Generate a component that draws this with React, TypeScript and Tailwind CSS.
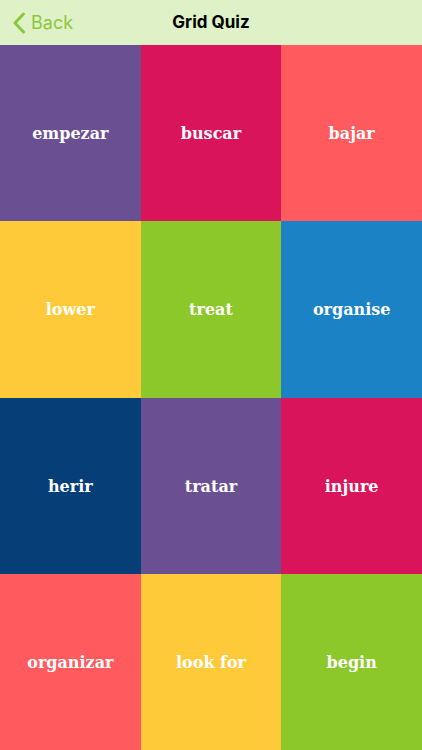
import React from "react";

const tiles: { label: string; bg: string }[] = [
  { label: "empezar", bg: "bg-[#6a4f93]" },
  { label: "buscar", bg: "bg-[#d9145a]" },
  { label: "bajar", bg: "bg-[#ff5a5e]" },
  { label: "lower", bg: "bg-[#ffca3a]" },
  { label: "treat", bg: "bg-[#8cc82a]" },
  { label: "organise", bg: "bg-[#1b82c6]" },
  { label: "herir", bg: "bg-[#063f78]" },
  { label: "tratar", bg: "bg-[#6a4f93]" },
  { label: "injure", bg: "bg-[#d9145a]" },
  { label: "organizar", bg: "bg-[#ff5a5e]" },
  { label: "look for", bg: "bg-[#ffca3a]" },
  { label: "begin", bg: "bg-[#8cc82a]" },
];

export default function App() {
  return (
    <div className="w-[422px] h-[750px] flex flex-col overflow-hidden">
      <div className="h-[45px] shrink-0 bg-[#dff2c7] flex items-center relative font-['Inter','Liberation_Sans',sans-serif]">
        <div className="absolute left-[12px] top-0 h-full flex items-center gap-[5px] text-[#8cc63f]">
          <svg width="14" height="22" viewBox="0 0 14 22" fill="none">
            <path d="M11.5 2 L3 11 L11.5 20" stroke="#8cc63f" strokeWidth="3" strokeLinecap="round" strokeLinejoin="round" />
          </svg>
          <span className="text-[18px] leading-none">Back</span>
        </div>
        <div className="flex-1 text-center text-[17px] font-bold text-black">Grid Quiz</div>
      </div>
      <div className="flex-1 grid grid-cols-3 grid-rows-4">
        {tiles.map((t) => (
          <div key={t.label} className={`${t.bg} flex items-center justify-center pt-[2px]`}>
            <span className="text-white font-bold text-[16px] font-['DejaVu_Serif',serif]">{t.label}</span>
          </div>
        ))}
      </div>
    </div>
  );
}
